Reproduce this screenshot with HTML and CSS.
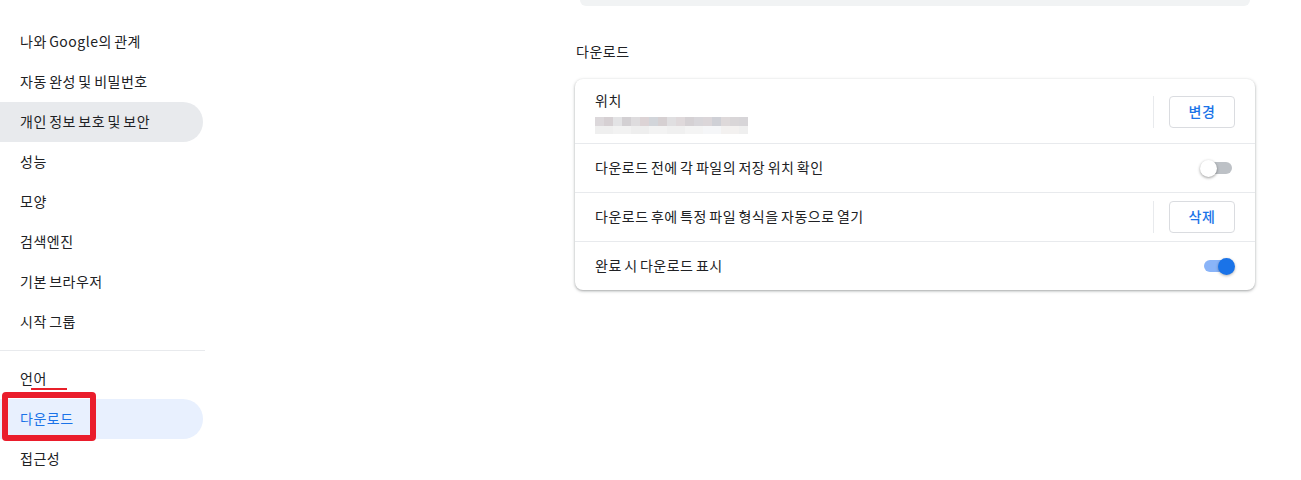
FILE: index.html
```html
<!DOCTYPE html>
<html lang="ko">
<head>
<meta charset="utf-8">
<title>설정 - 다운로드</title>
<link rel="stylesheet" href="styles.css">
</head>
<body>
<div class="page">
  <nav class="sidebar">
    <a class="nav-item">나와 Google의 관계</a>
    <a class="nav-item">자동 완성 및 비밀번호</a>
    <a class="nav-item hover">개인 정보 보호 및 보안</a>
    <a class="nav-item">성능</a>
    <a class="nav-item">모양</a>
    <a class="nav-item">검색엔진</a>
    <a class="nav-item">기본 브라우저</a>
    <a class="nav-item">시작 그룹</a>
    <div class="nav-divider"></div>
    <a class="nav-item">언어</a>
    <a class="nav-item active">다운로드</a>
    <a class="nav-item">접근성</a>
    <span class="mark-underline"></span>
    <span class="mark-box"></span>
  </nav>

  <main class="main">
    <div class="prev-card"></div>
    <h2 class="section-title">다운로드</h2>
    <section class="card">
      <div class="row row-tall">
        <div class="row-text">
          <div class="label">위치</div>
          <div class="blurred"></div>
        </div>
        <div class="sep"></div>
        <button class="btn">변경</button>
      </div>
      <div class="row">
        <div class="label">다운로드 전에 각 파일의 저장 위치 확인</div>
        <span class="toggle"><span class="track"></span><span class="knob"></span></span>
      </div>
      <div class="row">
        <div class="label">다운로드 후에 특정 파일 형식을 자동으로 열기</div>
        <div class="sep"></div>
        <button class="btn">삭제</button>
      </div>
      <div class="row">
        <div class="label">완료 시 다운로드 표시</div>
        <span class="toggle on"><span class="track"></span><span class="knob"></span></span>
      </div>
    </section>
  </main>
</div>
</body>
</html>
```

FILE: styles.css
```css
* { box-sizing: border-box; }
html, body {
  margin: 0;
  padding: 0;
  background: #ffffff;
}
body {
  font-family: "Noto Sans CJK KR", "Noto Sans", sans-serif;
  font-size: 14px;
  letter-spacing: 0.5px;
  word-spacing: -2px;
  color: #202124;
  width: 1301px;
  height: 480px;
  overflow: hidden;
}
.page {
  display: flex;
  align-items: flex-start;
}
.sidebar {
  position: relative;
  width: 205px;
  flex: none;
  padding-top: 22px;
  display: flex;
  flex-direction: column;
}
.nav-item {
  display: flex;
  align-items: center;
  height: 40px;
  width: 203px;
  padding-left: 20px;
  padding-bottom: 2px;
  color: #202124;
  border-radius: 0 20px 20px 0;
  line-height: 20px;
}
.nav-item.hover { background: #e8eaed; }
.nav-item.active { background: #e8f0fe; color: #1a73e8; }
.nav-divider {
  height: 1px;
  background: #e8eaed;
  margin: 8px 0;
  width: 205px;
}
.mark-underline {
  position: absolute;
  left: 31px;
  top: 388px;
  width: 36px;
  height: 2px;
  background: #e8202a;
}
.mark-box {
  position: absolute;
  left: 2px;
  top: 392px;
  width: 94px;
  height: 49px;
  border: 6px solid #ea1d2c;
  border-radius: 4px;
}
.main {
  margin-left: 370px;
  width: 680px;
  display: flex;
  flex-direction: column;
}
.prev-card {
  height: 6px;
  margin: 0 5px 0 5px;
  background: #f1f3f4;
  border-radius: 0 0 12px 12px;
}
.section-title {
  margin: 35px 0 18px 1px;
  font-size: 14px;
  font-weight: 400;
  line-height: 20px;
  height: 20px;
}
.card {
  background: #fff;
  border-radius: 8px;
  box-shadow: 0 1px 2px rgba(60,64,67,0.3), 0 1px 3px 1px rgba(60,64,67,0.15);
  display: flex;
  flex-direction: column;
}
.row {
  display: flex;
  align-items: center;
  min-height: 49px;
  padding: 0 20px;
  border-top: 1px solid #e8eaed;
}
.row .label { padding-bottom: 2px; }
.row-tall {
  min-height: 64px;
  border-top: none;
  padding-top: 1px;
}
.row-text {
  flex: 1;
  display: flex;
  flex-direction: column;
  gap: 5px;
}
.row .label {
  flex: 1;
  line-height: 20px;
}
.row-text .label { flex: none; }
.blurred {
  width: 153px;
  height: 17px;
  background:
    linear-gradient(to right,
      #dcd8db 0 9px, #d6d0d3 9px 18px, #e3e3e5 18px 27px, #d3d0d3 27px 36px,
      #dedcde 36px 45px, #dcd3d5 45px 54px, #d2d5da 54px 63px, #d6d0d2 63px 72px,
      #e0dfe1 72px 81px, #dfd9db 81px 90px, #d5d1d4 90px 99px, #d8d6da 99px 108px,
      #dbd6d9 108px 117px, #cfd0d6 117px 126px, #ded9da 126px 135px, #d9d6d8 135px 144px,
      #d7d5d8 144px 153px) top / 100% 9px no-repeat,
    linear-gradient(to right,
      #efefef 0 18px, #f2f2f2 18px 36px, #eeeeee 36px 54px, #f3f3f3 54px 72px,
      #f0f0f0 72px 90px, #f4f4f4 90px 108px, #f5f6f8 108px 126px, #f3f1f0 126px 144px,
      #efefef 144px 153px) bottom / 100% 8px no-repeat;
}
.sep {
  width: 1px;
  height: 32px;
  background: #e8eaed;
  margin-right: 15px;
}
.btn {
  font-family: inherit;
  font-size: 14px;
  letter-spacing: 0.5px;
  font-weight: 500;
  color: #1a73e8;
  background: #fff;
  border: 1px solid #dadce0;
  border-radius: 4px;
  width: 66px;
  height: 32px;
  padding: 0 0 2px;
  line-height: 28px;
}
.toggle {
  position: relative;
  width: 35px;
  height: 16px;
  flex: none;
}
.toggle .track {
  position: absolute;
  left: 4px;
  right: 3px;
  top: 2px;
  height: 12px;
  border-radius: 6px;
  background: #bdc1c6;
}
.toggle .knob {
  position: absolute;
  left: 0;
  top: 0;
  width: 17px;
  height: 17px;
  border-radius: 50%;
  background: #fff;
  box-shadow: 0 1px 3px rgba(0,0,0,0.4);
}
.toggle.on .track { background: #8ab4f8; }
.toggle.on .knob {
  left: auto;
  right: 0;
  background: #1a73e8;
  box-shadow: 0 1px 3px rgba(0,0,0,0.3);
}
```
